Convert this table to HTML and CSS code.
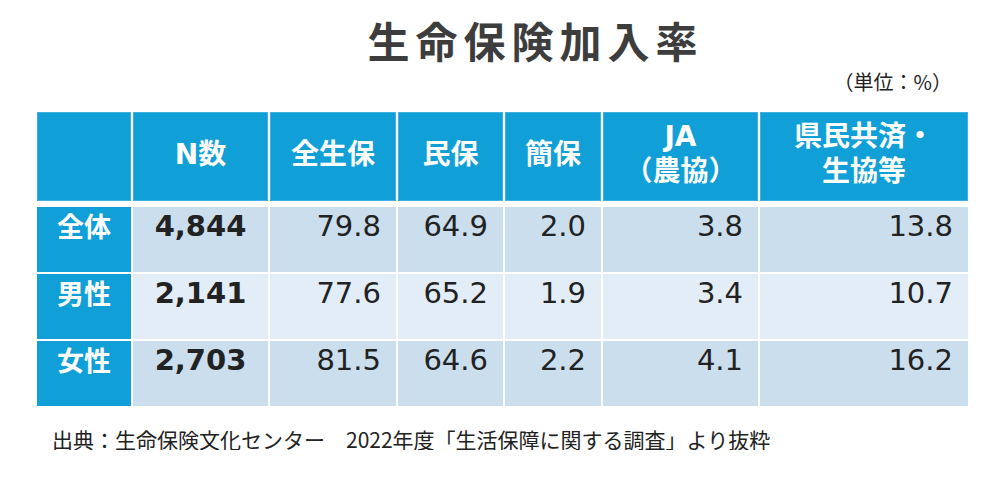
FILE: index.html
```html
<!DOCTYPE html>
<html lang="ja">
<head>
<meta charset="utf-8">
<title>生命保険加入率</title>
<link rel="stylesheet" href="styles.css">
</head>
<body>
<div class="page">
  <h1 class="title">生命保険加入率</h1>
  <div class="unit">（単位：%）</div>
  <div class="table">
    <div class="row head">
      <div class="cell"></div>
      <div class="cell">N数</div>
      <div class="cell">全生保</div>
      <div class="cell">民保</div>
      <div class="cell">簡保</div>
      <div class="cell">JA<br>（農協）</div>
      <div class="cell">県民共済・<br>生協等</div>
    </div>
    <div class="row body odd">
      <div class="cell label">全体</div>
      <div class="cell n">4,844</div>
      <div class="cell num">79.8</div>
      <div class="cell num">64.9</div>
      <div class="cell num">2.0</div>
      <div class="cell num">3.8</div>
      <div class="cell num">13.8</div>
    </div>
    <div class="row body even">
      <div class="cell label">男性</div>
      <div class="cell n">2,141</div>
      <div class="cell num">77.6</div>
      <div class="cell num">65.2</div>
      <div class="cell num">1.9</div>
      <div class="cell num">3.4</div>
      <div class="cell num">10.7</div>
    </div>
    <div class="row body odd">
      <div class="cell label">女性</div>
      <div class="cell n">2,703</div>
      <div class="cell num">81.5</div>
      <div class="cell num">64.6</div>
      <div class="cell num">2.2</div>
      <div class="cell num">4.1</div>
      <div class="cell num">16.2</div>
    </div>
  </div>
  <p class="source">出典：生命保険文化センター　2022年度「生活保障に関する調査」より抜粋</p>
</div>
</body>
</html>
```
FILE: styles.css
```css
html, body {
  margin: 0;
  padding: 0;
  background: #ffffff;
}

body {
  font-family: "Noto Sans CJK JP", sans-serif;
  color: #222222;
}

.page {
  width: 931px;
  margin-left: 37px;
  padding-top: 19px;
}

.title {
  margin: 0;
  padding-left: 66px;
  font-size: 42px;
  line-height: 42px;
  font-weight: 700;
  letter-spacing: 6px;
  text-align: center;
  color: #3d3d3d;
}

.unit {
  margin-top: 10px;
  padding-right: 16px;
  font-size: 20px;
  line-height: 22px;
  text-align: right;
  color: #222222;
}

.table {
  margin-top: 19px;
  display: flex;
  flex-direction: column;
  gap: 2px;
}

.row {
  display: grid;
  grid-template-columns: 94px 135px 126px 105px 96px 155px 208px;
  column-gap: 2px;
}

.head {
  height: 89px;
  margin-bottom: 4px;
}

.head .cell {
  background: #109fd7;
  box-shadow: inset 0 0 0 1px #3fb1e0;
  color: #ffffff;
  font-family: "DejaVu Sans", "Noto Sans CJK JP", sans-serif;
  font-weight: 700;
  font-size: 28px;
  line-height: 35px;
  display: flex;
  align-items: center;
  justify-content: center;
  text-align: center;
  padding-bottom: 5px;
  box-sizing: border-box;
}

.body {
  height: 65px;
}

.body:first-of-type {
  height: 64px;
}

.odd .cell {
  background: #cbdeee;
}

.even .cell {
  background: #e3edf7;
}

.body .cell {
  padding-top: 4px;
  box-sizing: border-box;
  line-height: 30px;
}

.body .cell.label {
  background: #109fd7;
  color: #ffffff;
  font-weight: 700;
  font-size: 27px;
  text-align: center;
}

.cell.n {
  font-family: "DejaVu Sans", sans-serif;
  font-weight: 700;
  font-size: 29px;
  text-align: center;
  color: #222222;
}

.cell.num {
  font-family: "DejaVu Sans", sans-serif;
  font-size: 29px;
  text-align: right;
  padding-right: 15px;
  color: #222222;
}

.source {
  margin: 23px 0 0 0;
  padding-left: 15px;
  font-size: 21px;
  line-height: 21px;
  color: #222222;
}
```
